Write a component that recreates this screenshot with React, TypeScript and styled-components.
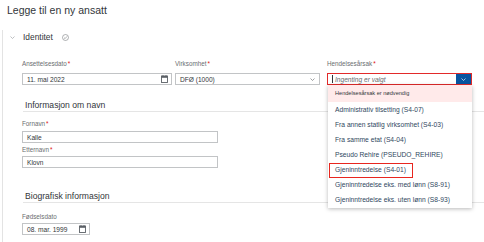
import React from 'react';
import styled, { createGlobalStyle } from 'styled-components';

const Global = createGlobalStyle`
  html, body { margin: 0; padding: 0; background: #fff; }
  body { font-family: "Liberation Sans", Arial, sans-serif; width: 484px; height: 242px; overflow: hidden; }
`;

const Page = styled.div`
  width: 484px;
  height: 242px;
  overflow: hidden;
  background: #fff;
`;

const Title = styled.h1`
  margin: 0;
  height: 20px;
  padding-left: 7px;
  font-size: 10.5px;
  line-height: 20px;
  font-weight: 400;
  color: #32363a;
`;

const Panel = styled.div`
  margin-left: 2px;
  border-left: 1px solid #e3e3e3;
  height: 222px;
`;

const AccordionHeader = styled.div`
  display: flex;
  align-items: center;
  height: 14px;
  margin-top: 10px;
  padding-left: 7px;
`;

const HeaderText = styled.span`
  margin-left: 8px;
  margin-right: 9px;
  font-size: 8.4px;
  color: #32363a;
`;

const Content = styled.div`
  padding-left: 19px;
`;

const Row = styled.div`
  display: grid;
  grid-template-columns: 153px 152px 152px;
  margin-top: 15px;
`;

const Field = styled.div<{ $mt?: number }>`
  position: relative;
  margin-top: ${p => p.$mt ?? 0}px;
`;

const Label = styled.div<{ $gap: number }>`
  height: 9px;
  line-height: 9px;
  font-size: 6.3px;
  color: #6a6d70;
  margin-bottom: ${p => p.$gap}px;
`;

const Req = styled.span`
  color: #d11;
  margin-left: 1px;
`;

const Input = styled.div<{ $w: number; $error?: boolean }>`
  box-sizing: border-box;
  width: ${p => p.$w}px;
  height: 12px;
  border: 1px solid ${p => (p.$error ? '#e22a2a' : '#c2c4c6')};
  background: #fff;
  display: flex;
  align-items: center;
  padding-left: 4px;
  font-size: 6.6px;
  color: #32363a;
`;

const InputText = styled.span`
  flex: 1;
  white-space: nowrap;
`;

const Placeholder = styled.span`
  flex: 1;
  font-style: italic;
  color: #6a6d70;
  display: flex;
  align-items: center;
  gap: 2px;
`;

const Caret = styled.span`
  width: 1px;
  height: 8px;
  background: #32363a;
`;

const IconSlot = styled.span`
  width: 13px;
  display: flex;
  align-items: center;
  justify-content: center;
`;

const BlueButton = styled.span`
  width: 15px;
  height: 100%;
  background: #0854a0;
  display: flex;
  align-items: center;
  justify-content: center;
`;

const SectionHeading = styled.div<{ $mt: number }>`
  margin-top: ${p => p.$mt}px;
  height: 11px;
  line-height: 11px;
  padding-left: 2px;
  margin-left: 1px;
  font-size: 8.6px;
  color: #32363a;
  border-bottom: 1px solid #e5e5e5;
  width: 500px;
`;

const Dropdown = styled.div`
  position: absolute;
  top: 100%;
  left: 1px;
  width: 144px;
  background: #fff;
  box-shadow: 0 1px 4px rgba(0, 0, 0, 0.28);
  z-index: 5;
  padding-bottom: 1px;
`;

const ErrorRow = styled.div`
  height: 17px;
  line-height: 17px;
  padding-left: 7px;
  background: #ffeaea;
  font-size: 5.6px;
  color: #32363a;
`;

const Item = styled.div`
  position: relative;
  height: 15px;
  line-height: 15px;
  padding-left: 7px;
  font-size: 6.7px;
  color: #2f4760;
  white-space: nowrap;
`;

const Marker = styled.span`
  position: absolute;
  left: 1px;
  top: 1px;
  width: 84px;
  height: 15px;
  box-sizing: border-box;
  border: 1.5px solid #e8261f;
`;

const Chevron = ({ color = '#6a6d70', size = 6 }: { color?: string; size?: number }) => (
  <svg width={size} height={size * 0.6} viewBox="0 0 10 6">
    <path d="M1 1 L5 5 L9 1" fill="none" stroke={color} strokeWidth="1.3" />
  </svg>
);

const CalendarIcon = () => (
  <svg width="7" height="8" viewBox="0 0 7 8">
    <rect x="0.5" y="1" width="6" height="6.5" fill="none" stroke="#5b6066" strokeWidth="0.9" />
    <rect x="0.5" y="1" width="6" height="1.8" fill="#5b6066" />
    <line x1="2" y1="0" x2="2" y2="1.5" stroke="#5b6066" strokeWidth="0.8" />
    <line x1="5" y1="0" x2="5" y2="1.5" stroke="#5b6066" strokeWidth="0.8" />
  </svg>
);

const CheckCircle = () => (
  <svg width="7" height="7" viewBox="0 0 14 14">
    <circle cx="7" cy="7" r="6" fill="none" stroke="#7a7e82" strokeWidth="1.2" />
    <path d="M4 7.2 L6.2 9.3 L10 4.8" fill="none" stroke="#7a7e82" strokeWidth="1.2" />
  </svg>
);

const items = [
  'Administrativ tilsetting (S4-07)',
  'Fra annen statlig virksomhet (S4-03)',
  'Fra samme etat (S4-04)',
  'Pseudo Rehire (PSEUDO_REHIRE)',
  'Gjeninntredelse (S4-01)',
  'Gjeninntredelse eks. med lønn (S8-91)',
  'Gjeninntredelse eks. uten lønn (S8-93)',
];

export default function App() {
  return (
    <Page>
      <Global />
      <Title>Legge til en ny ansatt</Title>
      <Panel>
        <AccordionHeader>
          <Chevron color="#9a9ea2" size={5} />
          <HeaderText>Identitet</HeaderText>
          <CheckCircle />
        </AccordionHeader>
        <Content>
          <Row>
            <Field>
              <Label $gap={5}>Ansettelsesdato<Req>*</Req></Label>
              <Input $w={150}>
                <InputText>11. mai 2022</InputText>
                <IconSlot><CalendarIcon /></IconSlot>
              </Input>
            </Field>
            <Field>
              <Label $gap={5}>Virksomhet<Req>*</Req></Label>
              <Input $w={145}>
                <InputText>DFØ (1000)</InputText>
                <IconSlot><Chevron size={5} /></IconSlot>
              </Input>
            </Field>
            <Field>
              <Label $gap={5}>Hendelsesårsak<Req>*</Req></Label>
              <Input $w={145} $error>
                <Placeholder><Caret />Ingenting er valgt</Placeholder>
                <BlueButton><Chevron color="#fff" size={5} /></BlueButton>
              </Input>
              <Dropdown>
                <ErrorRow>Hendelsesårsak er nødvendig</ErrorRow>
                {items.map((t, i) => (
                  <Item key={t}>
                    {t}
                    {i === 4 && <Marker />}
                  </Item>
                ))}
              </Dropdown>
            </Field>
          </Row>
          <SectionHeading $mt={15}>Informasjon om navn</SectionHeading>
          <Field $mt={7}>
            <Label $gap={3}>Fornavn<Req>*</Req></Label>
            <Input $w={196}><InputText>Kalle</InputText></Input>
          </Field>
          <Field $mt={2}>
            <Label $gap={2}>Etternavn<Req>*</Req></Label>
            <Input $w={196}><InputText>Klovn</InputText></Input>
          </Field>
          <SectionHeading $mt={23}>Biografisk informasjon</SectionHeading>
          <Field $mt={9}>
            <Label $gap={2}>Fødselsdato</Label>
            <Input $w={68}>
              <InputText>08. mar. 1999</InputText>
              <IconSlot><CalendarIcon /></IconSlot>
            </Input>
          </Field>
        </Content>
      </Panel>
    </Page>
  );
}
